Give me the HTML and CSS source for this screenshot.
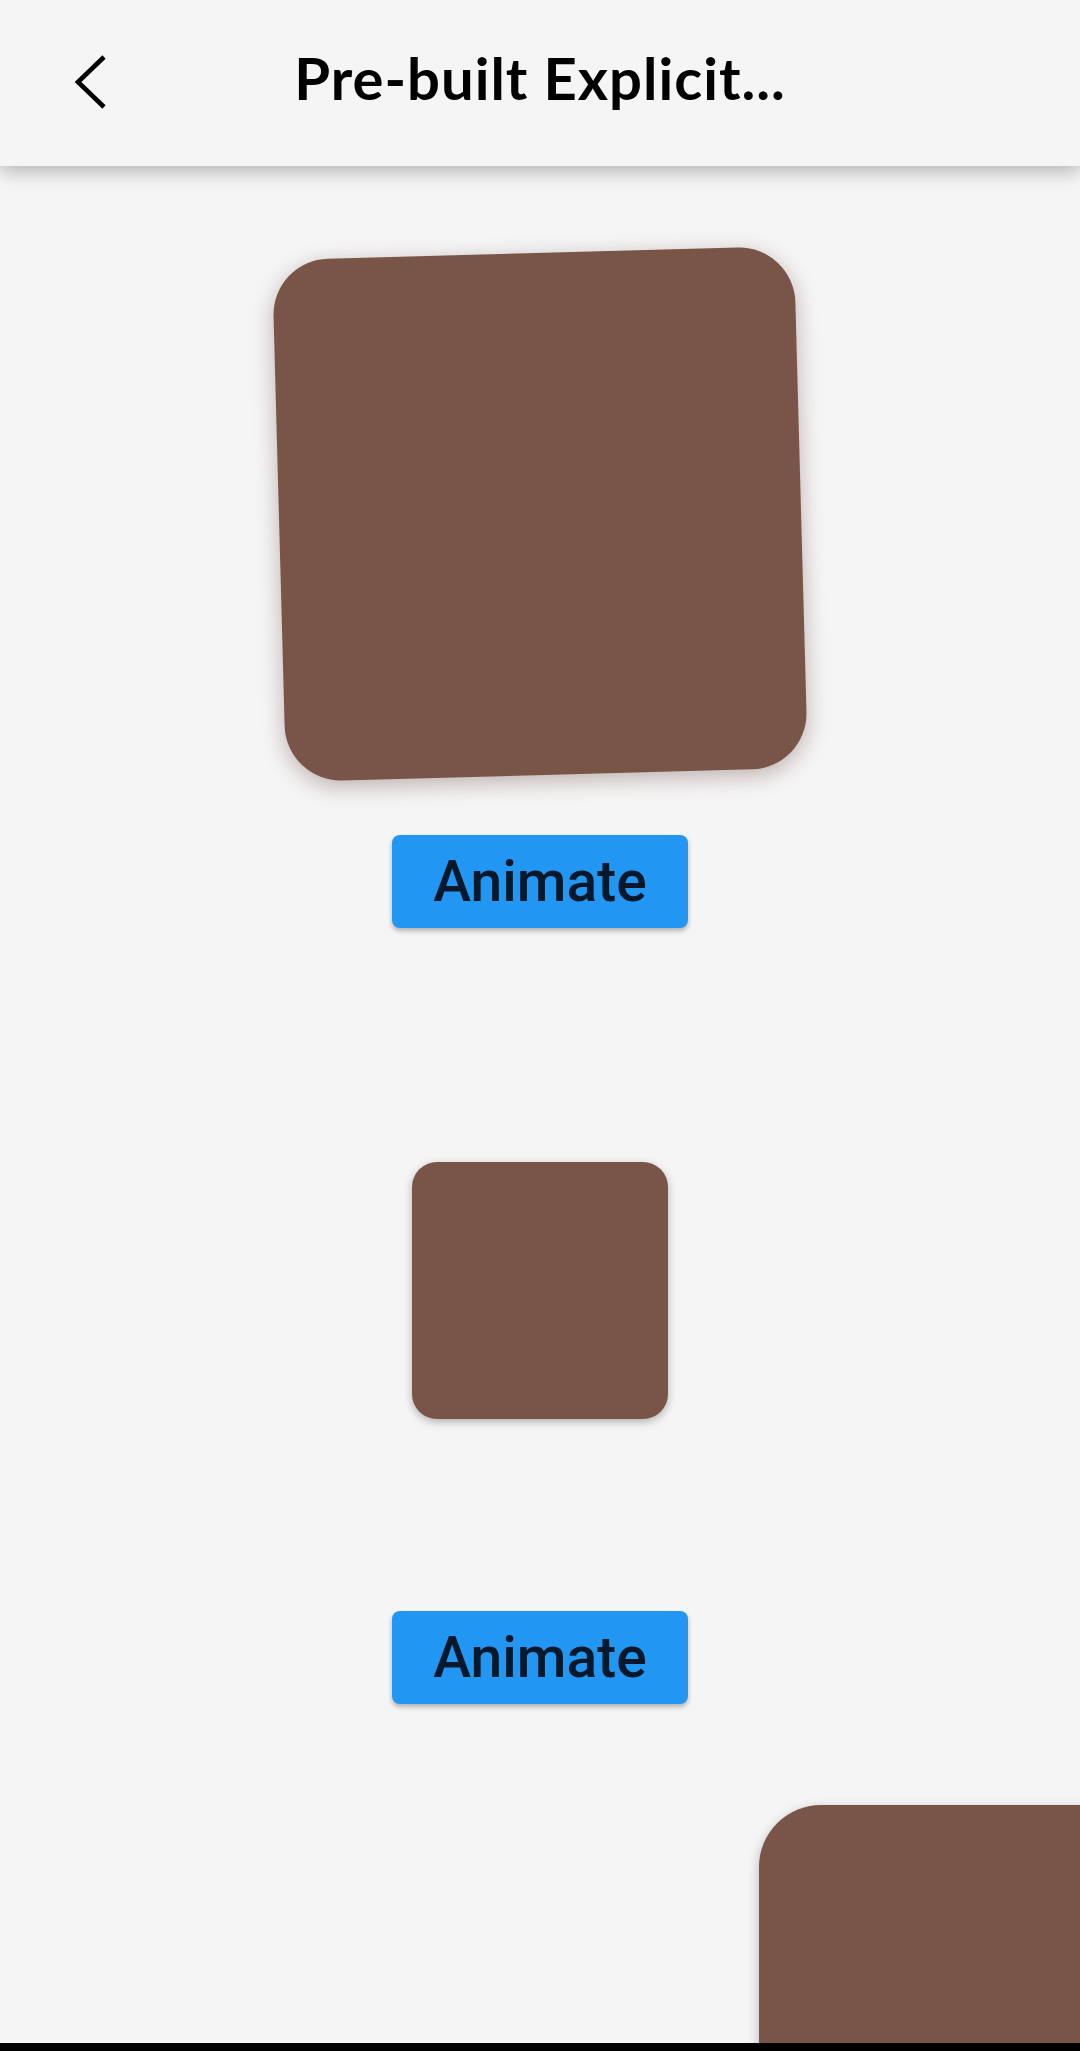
FILE: index.html
```html
<!DOCTYPE html>
<html lang="en">
<head>
<meta charset="utf-8">
<title>Pre-built Explicit Animations</title>
<link rel="stylesheet" href="styles.css">
</head>
<body>
<div class="app">
  <header class="appbar">
    <div class="appbar-lead">
      <svg class="back" width="40" height="60" viewBox="0 0 40 60" aria-hidden="true">
        <polyline points="30,5 4,30 30,55" fill="none" stroke="#000" stroke-width="4.6" stroke-linejoin="miter" stroke-linecap="butt"/>
      </svg>
    </div>
    <h1 class="title">Pre-built Explicit...</h1>
    <div></div>
  </header>
  <main class="content">
    <div class="box box-large"></div>
    <button class="btn btn-first">Animate</button>
    <div class="box box-small"></div>
    <button class="btn btn-second">Animate</button>
    <div class="box box-corner"></div>
  </main>
</div>
<div class="navbar"></div>
</body>
</html>
```
FILE: styles.css
```css
html, body {
  margin: 0;
  padding: 0;
}
body {
  width: 1080px;
  height: 2051px;
  overflow: hidden;
  background: #f5f5f5;
  font-family: "Lato", "Noto Sans", sans-serif;
}
.app {
  height: 2043px;
  overflow: hidden;
  display: flex;
  flex-direction: column;
}
.appbar {
  flex: 0 0 166px;
  height: 166px;
  background: #f5f5f5;
  display: grid;
  grid-template-columns: 1fr auto 1fr;
  align-items: center;
  box-shadow: 0 5px 18px rgba(0, 0, 0, 0.28);
  position: relative;
  z-index: 2;
}
.appbar-lead {
  display: flex;
  align-items: center;
  padding-left: 74px;
  padding-bottom: 2px;
}
.back {
  display: block;
}
.title {
  margin: 0;
  font-family: "Lato", sans-serif;
  font-weight: 700;
  font-size: 58px;
  letter-spacing: 1px;
  color: #000;
  padding-bottom: 12px;
}
.content {
  display: flex;
  flex-direction: column;
  align-items: center;
  padding-top: 87px;
}
.box {
  background: #795548;
  flex: 0 0 auto;
}
.box-large {
  width: 522px;
  height: 522px;
  border-radius: 56px;
  transform: rotate(-1.55deg);
  box-shadow: 0 6px 22px rgba(60, 20, 10, 0.3);
}
.box-small {
  width: 256px;
  height: 257px;
  border-radius: 25px;
  margin-top: 234px;
  box-shadow: 0 3px 8px rgba(0, 0, 0, 0.28);
}
.box-corner {
  align-self: flex-start;
  margin-left: 759px;
  margin-top: 101px;
  width: 525px;
  height: 525px;
  border-radius: 62px;
  box-shadow: 0 4px 12px rgba(0, 0, 0, 0.25);
}
.btn {
  width: 296px;
  height: 93px;
  border: none;
  border-radius: 8px;
  background: #2196f3;
  color: #07182a;
  font-family: "Roboto", sans-serif;
  font-weight: 500;
  font-size: 57px;
  line-height: 93px;
  padding: 0;
  box-shadow: 0 3px 5px rgba(0, 0, 0, 0.28);
}
.btn-first {
  margin-top: 60px;
}
.btn-second {
  margin-top: 192px;
}
.navbar {
  height: 8px;
  background: #000;
}
```
